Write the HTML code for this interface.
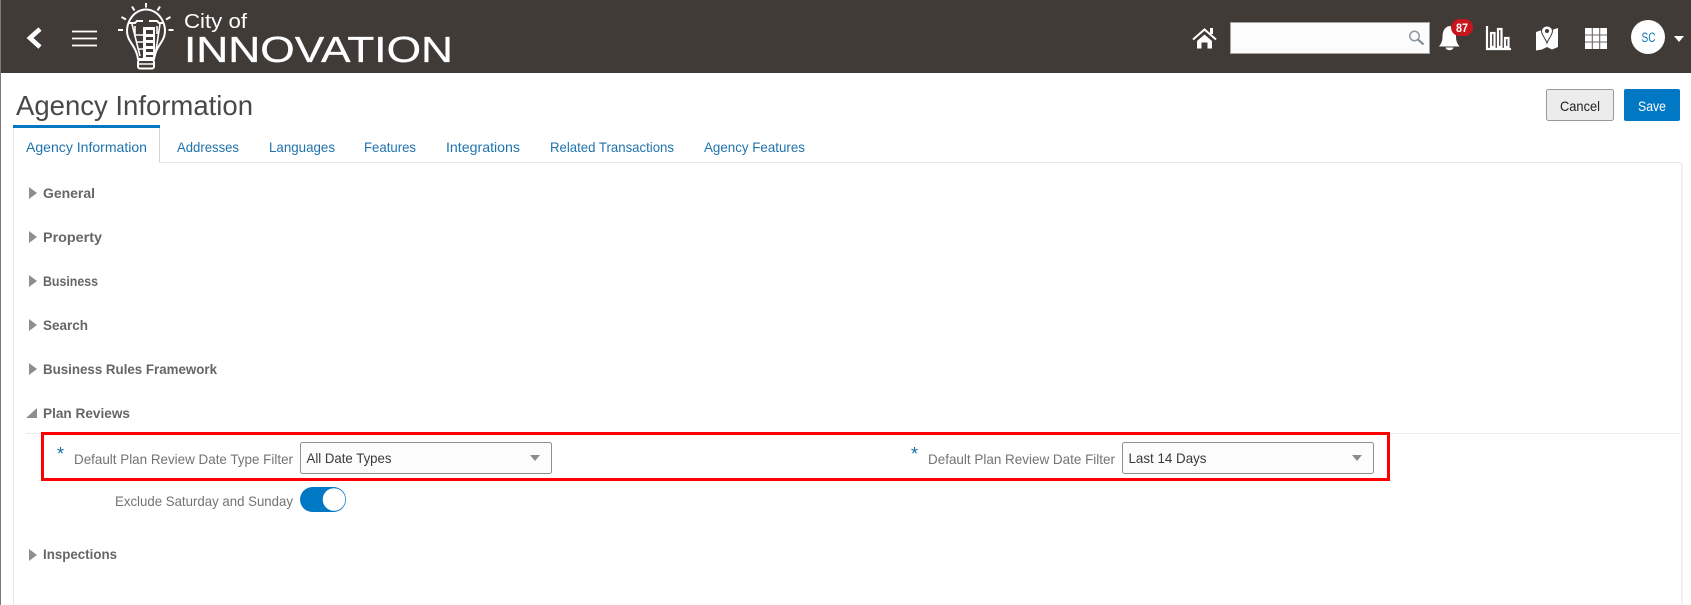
<!DOCTYPE html>
<html><head><meta charset="utf-8"><title>Agency Information</title>
<style>
html,body{margin:0;padding:0;background:#fff;width:1691px;height:605px;overflow:hidden}
svg{display:block}
text{font-family:"Liberation Sans",Arial,sans-serif}
.tab{font-size:14px;fill:#1f73ad}
.sec{font-size:14px;font-weight:bold;fill:#666}
.lab{font-size:14px;fill:#737373}
.val{font-size:14px;fill:#3a3a3a}
</style></head><body>
<svg width="1691" height="605" viewBox="0 0 1691 605" xmlns="http://www.w3.org/2000/svg">
<rect width="1691" height="605" fill="#fff"/>
<!-- window edge -->
<rect x="0" y="0" width="1" height="605" fill="#7a7a7a"/>
<!-- header -->
<rect x="1" y="0" width="1690" height="73" fill="#413b37"/>
<path d="M40 29L30 38L40 47" fill="none" stroke="#fff" stroke-width="4.6"/>
<path d="M72 31.500H97M72 38.500H97M72 45.500H97" stroke="#fff" stroke-width="1.800"/>
<!-- bulb logo -->
<g fill="none" stroke="#fff" stroke-width="2">
<path d="M138 59C137 51 133 46 130 41C125 33 127 24 131 18C135 12 141 9.500 146 9.500C151 9.500 157 12 161 18C165 24 167 33 162 41C159 46 155 51 154 59Z"/>
<path d="M129 23H135L137 21H143M149 21H157L159 23H163"/>
<path d="M132 24L137 44L140 56M160 24L157 44L155 56" stroke-width="1.600"/>
<path d="M135 26V34M157 26V34" stroke-width="1.600"/>
<rect x="138" y="60" width="16" height="8.500" rx="2"/>
<path d="M139 64H153" stroke-width="1.500"/>
<path d="M146 3V7.500M132 6.500L134.500 10.500M160 6.500L157.500 10.500M121.500 17L126 19.500M170.500 17L166 19.500M118 30H123M168.500 30H173.500"/>
</g>
<rect x="143" y="27" width="12" height="32" fill="#fff"/>
<g fill="#413b37"><rect x="146" y="30" width="7" height="4"/><rect x="146" y="37" width="7" height="3"/><rect x="146" y="43" width="7" height="3"/><rect x="146" y="49" width="7" height="3"/><rect x="146" y="55" width="7" height="2"/></g>
<path d="M134 35H143M136 42H143M138 49H143" stroke="#fff" stroke-width="1.500"/>
<text x="184" y="28" font-size="20" fill="#fff" textLength="63" lengthAdjust="spacingAndGlyphs">City of</text>
<text x="184" y="62" font-size="36" fill="#fff" stroke="#fff" stroke-width="0.3" textLength="269" lengthAdjust="spacingAndGlyphs">INNOVATION</text>
<!-- home -->
<path d="M1193 39.500L1204.500 29.500L1216 39.500" fill="none" stroke="#fff" stroke-width="2"/>
<rect x="1210" y="28" width="3" height="6" fill="#fff"/>
<path d="M1197 41L1204.500 34.500L1212 41V48.500H1207.500V42.500H1201.500V48.500H1197Z" fill="#fff"/>
<!-- search -->
<rect x="1230.500" y="22.500" width="199" height="31" fill="#fcfcfc" stroke="#a5a5a5"/>
<circle cx="1414.500" cy="36" r="4.700" fill="none" stroke="#8e9aa3" stroke-width="1.500"/>
<path d="M1418 39.500L1423.500 44.500" stroke="#7b8790" stroke-width="2"/>
<!-- bell -->
<path d="M1449.500 26C1444 27 1442.500 32 1442.500 37C1442.500 41 1441 44 1439 46.500H1459.500C1457.500 44 1456 41 1456 37C1456 32 1455 27 1449.500 26Z" fill="#fff"/>
<path d="M1445.500 47.500H1453.500C1453 51 1446 51 1445.500 47.500Z" fill="#fff"/>
<rect x="1451" y="19" width="22" height="17" rx="8.500" fill="#c4161c"/>
<text x="1456" y="32" font-size="11.500" font-weight="bold" fill="#fff" textLength="12" lengthAdjust="spacingAndGlyphs">87</text>
<!-- chart -->
<path d="M1487 26V49H1511" fill="none" stroke="#fff" stroke-width="2.200"/>
<g fill="none" stroke="#fff" stroke-width="2.200"><rect x="1491" y="33" width="3.500" height="14"/><rect x="1498" y="29" width="3.500" height="18"/><rect x="1505" y="38" width="3.500" height="9"/></g>
<!-- map -->
<path d="M1536 32L1542 30L1547 44L1552 30L1558 28V47L1552 49.500L1547 47L1542 49.500L1536 50.500Z" fill="#fff"/>
<path d="M1547 26C1543.500 26 1541.500 28.500 1541.500 31C1541.500 34.500 1545 38 1547 43C1549 38 1552.500 34.500 1552.500 31C1552.500 28.500 1550.500 26 1547 26Z" fill="#fff" stroke="#413b37"/>
<circle cx="1547" cy="31" r="2" fill="#413b37"/>
<!-- grid -->
<rect x="1585" y="28" width="22" height="21" fill="#fff"/>
<path d="M1592.300 28V49M1599.700 28V49M1585 35H1607M1585 42H1607" stroke="#6d6865" stroke-width="1.100"/>
<!-- avatar -->
<circle cx="1648" cy="37" r="17" fill="#fff"/>
<text x="1641.500" y="42" font-size="13.500" fill="#0f76bb" textLength="14" lengthAdjust="spacingAndGlyphs">SC</text>
<path d="M1674 36H1684L1679 42Z" fill="#fff"/>
<!-- title -->
<text x="16" y="115" font-size="28" fill="#484848" textLength="237" lengthAdjust="spacingAndGlyphs">Agency Information</text>
<!-- buttons -->
<rect x="1546.500" y="89.500" width="67" height="31" rx="2" fill="#ececec" stroke="#999"/>
<text x="1560" y="111" font-size="14" fill="#222" textLength="40" lengthAdjust="spacingAndGlyphs">Cancel</text>
<rect x="1624" y="89" width="56" height="32" rx="2" fill="#0078c4"/>
<text x="1638" y="111" font-size="14" fill="#fff" textLength="28" lengthAdjust="spacingAndGlyphs">Save</text>
<!-- panel -->
<path d="M159.500 162.500H1679a3 3 0 0 1 3 3V605" fill="none" stroke="#e6e6e6"/>
<path d="M13.500 128V605" stroke="#e6e6e6"/>
<path d="M159.500 128V162.500" stroke="#d4d4d4"/>
<rect x="13" y="125" width="147" height="3" fill="#0078c4"/>
<!-- tabs -->
<text class="tab" x="26" y="152" textLength="121" lengthAdjust="spacingAndGlyphs">Agency Information</text>
<text class="tab" x="177" y="152" textLength="62" lengthAdjust="spacingAndGlyphs">Addresses</text>
<text class="tab" x="269" y="152" textLength="66" lengthAdjust="spacingAndGlyphs">Languages</text>
<text class="tab" x="364" y="152" textLength="52" lengthAdjust="spacingAndGlyphs">Features</text>
<text class="tab" x="446" y="152" textLength="74" lengthAdjust="spacingAndGlyphs">Integrations</text>
<text class="tab" x="550" y="152" textLength="124" lengthAdjust="spacingAndGlyphs">Related Transactions</text>
<text class="tab" x="704" y="152" textLength="101" lengthAdjust="spacingAndGlyphs">Agency Features</text>
<!-- sections -->
<g fill="#8c8f92">
<path d="M29 187L37 193L29 199Z"/><path d="M29 231L37 237L29 243Z"/><path d="M29 275L37 281L29 287Z"/><path d="M29 319L37 325L29 331Z"/><path d="M29 363L37 369L29 375Z"/>
<path d="M37 408V418H26Z"/><path d="M29 549L37 555L29 561Z"/>
</g>
<text class="sec" x="43" y="198" textLength="52" lengthAdjust="spacingAndGlyphs">General</text>
<text class="sec" x="43" y="242" textLength="59" lengthAdjust="spacingAndGlyphs">Property</text>
<text class="sec" x="43" y="286" textLength="55" lengthAdjust="spacingAndGlyphs">Business</text>
<text class="sec" x="43" y="330" textLength="45" lengthAdjust="spacingAndGlyphs">Search</text>
<text class="sec" x="43" y="374" textLength="174" lengthAdjust="spacingAndGlyphs">Business Rules Framework</text>
<text class="sec" x="43" y="418" textLength="87" lengthAdjust="spacingAndGlyphs">Plan Reviews</text>
<text class="sec" x="43" y="559" textLength="74" lengthAdjust="spacingAndGlyphs">Inspections</text>
<!-- divider -->
<path d="M26 433.500H1680" stroke="#ececec"/>
<!-- fields -->
<text x="57" y="460" font-size="18" fill="#146ca8">*</text>
<text class="lab" x="74" y="464" textLength="219" lengthAdjust="spacingAndGlyphs">Default Plan Review Date Type Filter</text>
<rect x="300.500" y="442.500" width="251" height="31" rx="2" fill="#fcfcfc" stroke="#8f8f8f"/>
<text class="val" x="306.500" y="463" textLength="85" lengthAdjust="spacingAndGlyphs">All Date Types</text>
<path d="M530 455H540L535 461Z" fill="#8c8c8c"/>
<text x="911" y="460" font-size="18" fill="#146ca8">*</text>
<text class="lab" x="928" y="464" textLength="187" lengthAdjust="spacingAndGlyphs">Default Plan Review Date Filter</text>
<rect x="1122.500" y="442.500" width="251" height="31" rx="2" fill="#fcfcfc" stroke="#8f8f8f"/>
<text class="val" x="1128.500" y="463" textLength="78" lengthAdjust="spacingAndGlyphs">Last 14 Days</text>
<path d="M1352 455H1362L1357 461Z" fill="#8c8c8c"/>
<!-- red box -->
<rect x="42.500" y="433.500" width="1346" height="46" fill="none" stroke="#f00" stroke-width="3"/>
<!-- toggle -->
<text class="lab" x="115" y="506" textLength="178" lengthAdjust="spacingAndGlyphs">Exclude Saturday and Sunday</text>
<rect x="300" y="487" width="46" height="25" rx="12.500" fill="#0078c4"/>
<circle cx="334" cy="499.500" r="11.300" fill="#fff"/>
</svg>
</body></html>
